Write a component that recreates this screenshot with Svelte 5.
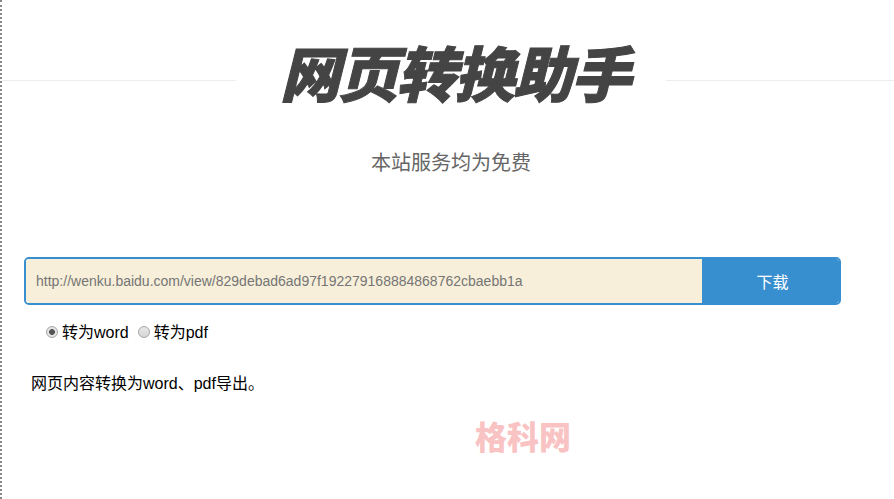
<script lang="ts">
	let format = $state('word');
	let url = $state('http://wenku.baidu.com/view/829debad6ad97f192279168884868762cbaebb1a');
</script>

<div class="page">
	<header class="hero">
		<span class="rule left"></span>
		<h1>网页转换助手</h1>
		<span class="rule right"></span>
	</header>
	<p class="sub">本站服务均为免费</p>

	<form class="search" onsubmit={(e) => e.preventDefault()}>
		<input type="text" bind:value={url} />
		<button type="submit">下载</button>
	</form>

	<div class="options">
		<label><input type="radio" name="format" value="word" bind:group={format} />转为word</label>
		<label><input type="radio" name="format" value="pdf" bind:group={format} />转为pdf</label>
	</div>

	<p class="note">网页内容转换为word、pdf导出。</p>
	<div class="mark">格科网</div>
</div>

<style>
	:global(body) {
		background: #fff;
	}
	.page {
		height: 499px;
		box-sizing: border-box;
		border-left: 2px dotted #888;
		font-family: 'Liberation Sans', 'Noto Sans CJK SC', sans-serif;
		font-size: 16px;
		color: #000;
		overflow: hidden;
	}
	.hero {
		display: flex;
		align-items: flex-start;
		height: 117px;
	}
	.rule {
		height: 1px;
		margin-top: 80px;
		background: #eee;
	}
	.left {
		flex: none;
		width: 234px;
	}
	.right {
		flex: 1;
	}
	h1 {
		flex: none;
		width: 430px;
		box-sizing: border-box;
		margin: 37px 0 0;
		padding-left: 7px;
		text-align: center;
		font-size: 60px;
		line-height: 80px;
		font-weight: 900;
		font-style: italic;
		letter-spacing: -1.8px;
		color: #444;
		-webkit-text-stroke: 1px #444;
		white-space: nowrap;
	}
	.sub {
		width: 898px;
		margin: 31px 0 0;
		text-align: center;
		font-size: 20px;
		line-height: 30px;
		color: #666;
	}
	.search {
		display: flex;
		width: 817px;
		height: 48px;
		margin: 79px 0 0 22px;
		box-sizing: border-box;
		border: 2px solid #388fd0;
		border-radius: 5px;
		overflow: hidden;
	}
	.search input {
		flex: 1;
		min-width: 0;
		padding: 0 10px;
		border: 0;
		outline: 0;
		background: #f7efd9;
		font: 14px 'Liberation Sans', sans-serif;
		color: #757575;
	}
	.search button {
		width: 137px;
		padding: 0 0 0 4px;
		border: 0;
		background: #388fd0;
		color: #fff;
		font: 16px 'Liberation Sans', 'Noto Sans CJK SC', sans-serif;
	}
	.options {
		display: flex;
		gap: 9px;
		margin: 17px 0 0 44px;
		line-height: 22px;
	}
	.options label {
		display: flex;
		align-items: center;
	}
	.options input {
		appearance: none;
		width: 12px;
		height: 12px;
		margin: 0 4px 2px 0;
		border: 1px solid #a6a6a6;
		border-radius: 50%;
		background: linear-gradient(#e8e8e8, #d6d6d6);
		box-sizing: border-box;
	}
	.options input:checked {
		background: radial-gradient(circle, #555 0 2.6px, #e4e4e4 3.2px);
	}
	.note {
		margin: 29px 0 0 29px;
		line-height: 22px;
	}
	.mark {
		width: 96px;
		margin: 25px 0 0 473px;
		font-size: 32px;
		line-height: 36px;
		font-weight: 900;
		color: #f9c3c3;
		white-space: nowrap;
	}
</style>
